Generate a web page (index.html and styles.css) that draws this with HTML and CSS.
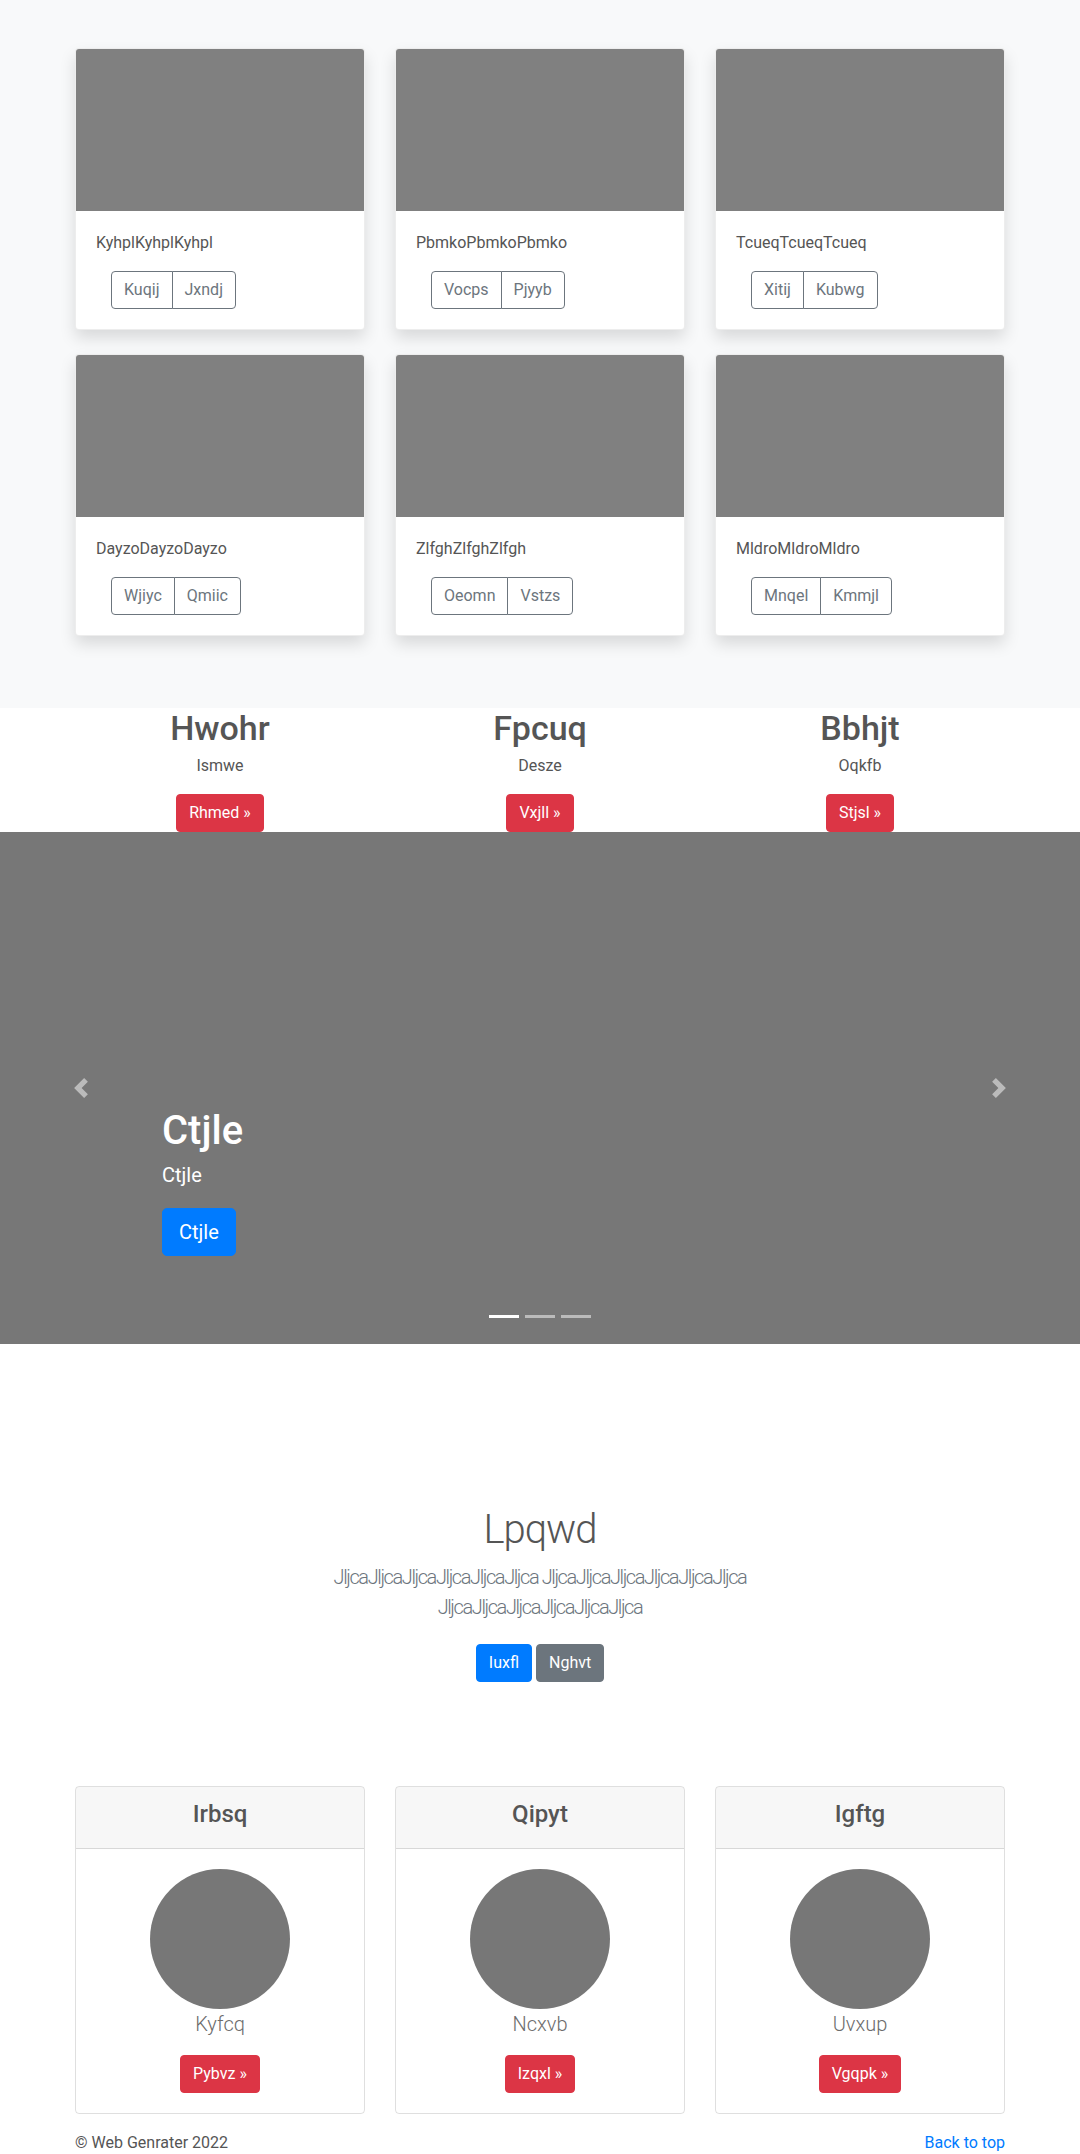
FILE: index.html
```html
<!DOCTYPE html>
<html lang="en">
<head>
<meta charset="utf-8">
<title>Album</title>
<link rel="stylesheet" href="styles.css">
</head>
<body>
<section class="album">
  <div class="container grid3 album-grid">
    <div class="card">
      <div class="card-img"></div>
      <div class="card-body">
        <p class="card-text">KyhplKyhplKyhpl</p>
        <div class="btn-group"><button class="btn btn-outline">Kuqij</button><button class="btn btn-outline">Jxndj</button></div>
      </div>
    </div>
    <div class="card">
      <div class="card-img"></div>
      <div class="card-body">
        <p class="card-text">PbmkoPbmkoPbmko</p>
        <div class="btn-group"><button class="btn btn-outline">Vocps</button><button class="btn btn-outline">Pjyyb</button></div>
      </div>
    </div>
    <div class="card">
      <div class="card-img"></div>
      <div class="card-body">
        <p class="card-text">TcueqTcueqTcueq</p>
        <div class="btn-group"><button class="btn btn-outline">Xitij</button><button class="btn btn-outline">Kubwg</button></div>
      </div>
    </div>
    <div class="card">
      <div class="card-img"></div>
      <div class="card-body">
        <p class="card-text">DayzoDayzoDayzo</p>
        <div class="btn-group"><button class="btn btn-outline">Wjiyc</button><button class="btn btn-outline">Qmiic</button></div>
      </div>
    </div>
    <div class="card">
      <div class="card-img"></div>
      <div class="card-body">
        <p class="card-text">ZlfghZlfghZlfgh</p>
        <div class="btn-group"><button class="btn btn-outline">Oeomn</button><button class="btn btn-outline">Vstzs</button></div>
      </div>
    </div>
    <div class="card">
      <div class="card-img"></div>
      <div class="card-body">
        <p class="card-text">MldroMldroMldro</p>
        <div class="btn-group"><button class="btn btn-outline">Mnqel</button><button class="btn btn-outline">Kmmjl</button></div>
      </div>
    </div>
  </div>
</section>

<section class="container grid3 features">
  <div class="feature">
    <h2>Hwohr</h2>
    <p>Ismwe</p>
    <a class="btn btn-danger" href="#">Rhmed &raquo;</a>
  </div>
  <div class="feature">
    <h2>Fpcuq</h2>
    <p>Desze</p>
    <a class="btn btn-danger" href="#">Vxjll &raquo;</a>
  </div>
  <div class="feature">
    <h2>Bbhjt</h2>
    <p>Oqkfb</p>
    <a class="btn btn-danger" href="#">Stjsl &raquo;</a>
  </div>
</section>

<section class="carousel">
  <a class="control control-prev" href="#" aria-label="Previous">
    <svg class="control-icon" width="20" height="20" viewBox="0 0 8 8"><path fill="#fff" d="M5.25 0l-4 4 4 4 1.5-1.5L4.25 4l2.5-2.5L5.25 0z"/></svg>
  </a>
  <div class="caption">
    <h1>Ctjle</h1>
    <p>Ctjle</p>
    <a class="btn btn-lg btn-primary" href="#">Ctjle</a>
  </div>
  <a class="control control-next" href="#" aria-label="Next">
    <svg class="control-icon" width="20" height="20" viewBox="0 0 8 8"><path fill="#fff" d="M2.75 0l-1.5 1.5L3.75 4l-2.5 2.5L2.75 8l4-4-4-4z"/></svg>
  </a>
  <ol class="indicators">
    <li class="active"></li>
    <li></li>
    <li></li>
  </ol>
</section>

<section class="jumbotron">
  <div class="jumbo-inner">
    <h1>Lpqwd</h1>
    <p class="lead">JljcaJljcaJljcaJljcaJljcaJljca JljcaJljcaJljcaJljcaJljcaJljca JljcaJljcaJljcaJljcaJljcaJljca</p>
    <div class="jumbo-actions">
      <a class="btn btn-primary" href="#">Iuxfl</a>
      <a class="btn btn-secondary" href="#">Nghvt</a>
    </div>
  </div>
</section>

<section class="container grid3 pricing">
  <div class="pcard">
    <div class="pcard-header"><h4>Irbsq</h4></div>
    <div class="pcard-body">
      <div class="avatar"></div>
      <p class="pname">Kyfcq</p>
      <a class="btn btn-danger" href="#">Pybvz &raquo;</a>
    </div>
  </div>
  <div class="pcard">
    <div class="pcard-header"><h4>Qipyt</h4></div>
    <div class="pcard-body">
      <div class="avatar"></div>
      <p class="pname">Ncxvb</p>
      <a class="btn btn-danger" href="#">Izqxl &raquo;</a>
    </div>
  </div>
  <div class="pcard">
    <div class="pcard-header"><h4>Igftg</h4></div>
    <div class="pcard-body">
      <div class="avatar"></div>
      <p class="pname">Uvxup</p>
      <a class="btn btn-danger" href="#">Vgqpk &raquo;</a>
    </div>
  </div>
</section>

<footer class="container footer">
  <p>&copy; Web Genrater 2022</p>
  <a href="#">Back to top</a>
</footer>
</body>
</html>
```

FILE: styles.css
```css
* { box-sizing: border-box; }

html, body {
  margin: 0;
  padding: 0;
}

body {
  font-family: Roboto, "Liberation Sans", sans-serif;
  font-size: 16px;
  line-height: 24px;
  color: #555;
  background: #fff;
}

p { margin: 0; }
h1, h2, h4 { margin: 0; }

.container {
  width: 960px;
  margin: 0 auto;
  padding: 0 15px;
}

.grid3 {
  display: grid;
  grid-template-columns: repeat(3, 290px);
  column-gap: 30px;
}

/* ---------- buttons ---------- */
.btn {
  display: inline-block;
  font-family: inherit;
  font-size: 16px;
  line-height: 24px;
  padding: 6px 12px;
  border: 1px solid transparent;
  border-radius: 4px;
  text-decoration: none;
  background: transparent;
  cursor: pointer;
  white-space: nowrap;
}
.btn-outline {
  color: #6c757d;
  border-color: #6c757d;
  background: #fff;
}
.btn-danger {
  color: #fff;
  background: #dc3545;
  border-color: #dc3545;
}
.btn-primary {
  color: #fff;
  background: #007bff;
  border-color: #007bff;
}
.btn-secondary {
  color: #fff;
  background: #6c757d;
  border-color: #6c757d;
}
.btn-lg {
  font-size: 20px;
  line-height: 30px;
  padding: 8px 16px;
  border-radius: 5px;
}

.btn-group {
  display: inline-flex;
  margin-left: 15px;
}
.btn-group .btn:first-child {
  border-top-right-radius: 0;
  border-bottom-right-radius: 0;
}
.btn-group .btn + .btn {
  margin-left: -1px;
  border-top-left-radius: 0;
  border-bottom-left-radius: 0;
}

/* ---------- album ---------- */
.album {
  background: #f8f9fa;
  padding: 48px 0 72px;
}
.album-grid {
  row-gap: 24px;
}
.card {
  background: #fff;
  border: 1px solid rgba(0, 0, 0, 0.07);
  border-radius: 4px;
  overflow: hidden;
  box-shadow: 0 8px 16px rgba(0, 0, 0, 0.13);
}
.card-img {
  height: 162px;
  background: #808080;
}
.card-body {
  padding: 20px;
}
.card-text {
  margin-bottom: 16px;
}

/* ---------- features ---------- */
.features {
  text-align: center;
}
.features h2 {
  font-size: 34px;
  line-height: 40px;
  font-weight: 500;
  margin-bottom: 6px;
}
.features p {
  margin-bottom: 16px;
}

/* ---------- carousel ---------- */
.carousel {
  position: relative;
  height: 512px;
  background: #777;
  margin-bottom: 64px;
}
.control {
  position: absolute;
  top: 0;
  bottom: 0;
  width: 15%;
  display: flex;
  align-items: center;
  justify-content: center;
}
.control-prev { left: 0; }
.control-next { right: 0; }
.control-icon {
  display: block;
  opacity: 0.5;
}
.caption {
  position: absolute;
  left: 15%;
  right: 15%;
  top: 275px;
  color: #fff;
  text-align: left;
}
.caption h1 {
  font-size: 40px;
  line-height: 48px;
  font-weight: 500;
  margin-bottom: 8px;
}
.caption p {
  font-size: 20px;
  line-height: 24px;
  margin-bottom: 21px;
}
.indicators {
  position: absolute;
  left: 0;
  right: 0;
  bottom: 0;
  margin: 0 15% 16px;
  padding: 0;
  list-style: none;
  display: flex;
  justify-content: center;
}
.indicators li {
  width: 30px;
  height: 3px;
  margin: 0 3px;
  box-sizing: content-box;
  border-top: 10px solid transparent;
  border-bottom: 10px solid transparent;
  background: #fff;
  background-clip: padding-box;
  opacity: 0.5;
}
.indicators li.active { opacity: 1; }

/* ---------- jumbotron ---------- */
.jumbotron {
  padding: 98px 0 104px;
  text-align: center;
}
.jumbo-inner {
  width: 640px;
  margin: 0 auto;
  padding: 0 15px;
}
.jumbotron h1 {
  font-size: 40px;
  line-height: 48px;
  font-weight: 300;
  letter-spacing: -1px;
  margin-bottom: 8px;
}
.lead {
  font-size: 20px;
  line-height: 30px;
  font-weight: 300;
  letter-spacing: -1.4px;
  color: #6c757d;
}
.jumbo-actions {
  display: flex;
  justify-content: center;
  gap: 4px;
  margin-top: 22px;
}

/* ---------- pricing ---------- */
.pcard {
  border: 1px solid rgba(0, 0, 0, 0.125);
  border-radius: 4px;
  text-align: center;
  overflow: hidden;
}
.pcard-header {
  background: rgba(0, 0, 0, 0.03);
  border-bottom: 1px solid rgba(0, 0, 0, 0.125);
  padding: 13px 20px 11px;
}
.pcard-header h4 {
  font-size: 24px;
  line-height: 28.8px;
  font-weight: 500;
  margin-bottom: 8px;
}
.pcard-body {
  padding: 20px;
  display: flex;
  flex-direction: column;
  align-items: center;
}
.avatar {
  width: 140px;
  height: 140px;
  border-radius: 50%;
  background: #777;
}
.pname {
  font-size: 20px;
  line-height: 30px;
  font-weight: 300;
  color: #6c6c6c;
  margin-bottom: 16px;
}

/* ---------- footer ---------- */
.footer {
  margin-top: 17px;
  display: flex;
  justify-content: space-between;
  padding-bottom: 16px;
}
.footer a {
  color: #007bff;
  text-decoration: none;
}
```
